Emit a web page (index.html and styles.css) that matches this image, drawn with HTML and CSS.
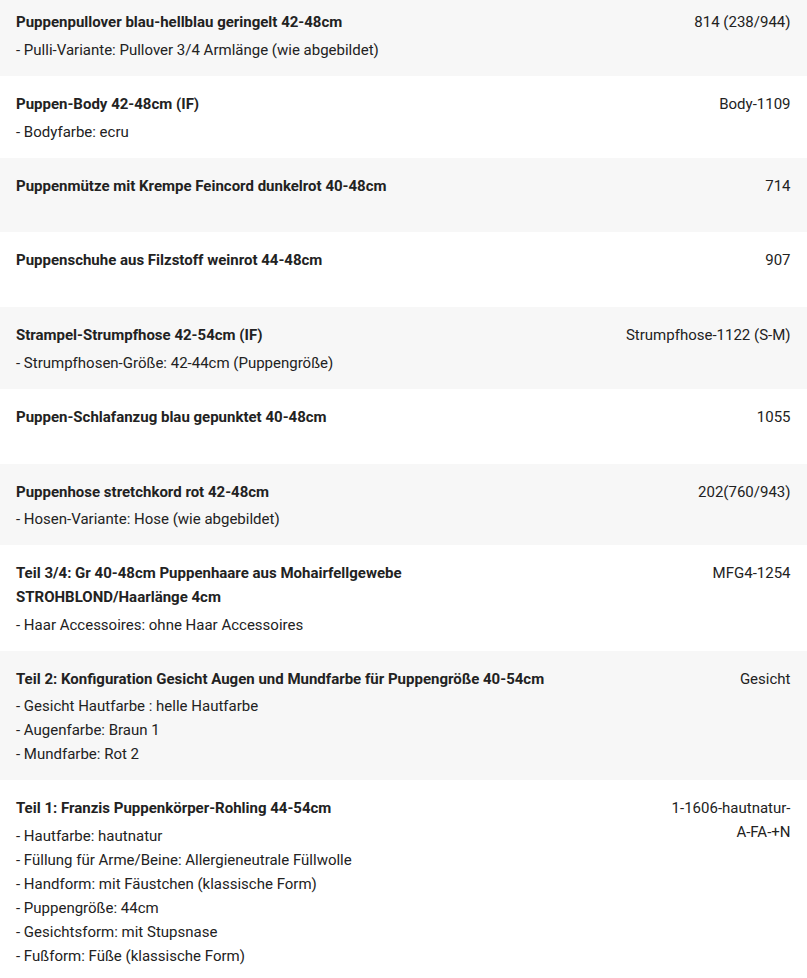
FILE: index.html
```html
<!DOCTYPE html>
<html lang="de">
<head>
<meta charset="utf-8">
<title>Bestellpositionen</title>
<link rel="stylesheet" href="styles.css">
</head>
<body>
<div class="items">
  <div class="item">
    <div class="info">
      <div class="title">Puppenpullover blau-hellblau geringelt 42-48cm</div>
      <ul class="opts"><li>- Pulli-Variante: Pullover 3/4 Armlänge (wie abgebildet)</li></ul>
    </div>
    <div class="sku">814 (238/944)</div>
  </div>
  <div class="item">
    <div class="info">
      <div class="title">Puppen-Body 42-48cm (IF)</div>
      <ul class="opts"><li>- Bodyfarbe: ecru</li></ul>
    </div>
    <div class="sku">Body-1109</div>
  </div>
  <div class="item">
    <div class="info">
      <div class="title">Puppenmütze mit Krempe Feincord dunkelrot 40-48cm</div>
    </div>
    <div class="sku">714</div>
  </div>
  <div class="item">
    <div class="info">
      <div class="title">Puppenschuhe aus Filzstoff weinrot 44-48cm</div>
    </div>
    <div class="sku">907</div>
  </div>
  <div class="item">
    <div class="info">
      <div class="title">Strampel-Strumpfhose 42-54cm (IF)</div>
      <ul class="opts"><li>- Strumpfhosen-Größe: 42-44cm (Puppengröße)</li></ul>
    </div>
    <div class="sku">Strumpfhose-1122 (S-M)</div>
  </div>
  <div class="item">
    <div class="info">
      <div class="title">Puppen-Schlafanzug blau gepunktet 40-48cm</div>
    </div>
    <div class="sku">1055</div>
  </div>
  <div class="item">
    <div class="info">
      <div class="title">Puppenhose stretchkord rot 42-48cm</div>
      <ul class="opts"><li>- Hosen-Variante: Hose (wie abgebildet)</li></ul>
    </div>
    <div class="sku">202(760/943)</div>
  </div>
  <div class="item">
    <div class="info">
      <div class="title">Teil 3/4: Gr 40-48cm Puppenhaare aus Mohairfellgewebe STROHBLOND/Haarlänge 4cm</div>
      <ul class="opts"><li>- Haar Accessoires: ohne Haar Accessoires</li></ul>
    </div>
    <div class="sku">MFG4-1254</div>
  </div>
  <div class="item">
    <div class="info">
      <div class="title">Teil 2: Konfiguration Gesicht Augen und Mundfarbe für Puppengröße 40-54cm</div>
      <ul class="opts">
        <li>- Gesicht Hautfarbe : helle Hautfarbe</li>
        <li>- Augenfarbe: Braun 1</li>
        <li>- Mundfarbe: Rot 2</li>
      </ul>
    </div>
    <div class="sku">Gesicht</div>
  </div>
  <div class="item">
    <div class="info">
      <div class="title">Teil 1: Franzis Puppenkörper-Rohling 44-54cm</div>
      <ul class="opts">
        <li>- Hautfarbe: hautnatur</li>
        <li>- Füllung für Arme/Beine: Allergieneutrale Füllwolle</li>
        <li>- Handform: mit Fäustchen (klassische Form)</li>
        <li>- Puppengröße: 44cm</li>
        <li>- Gesichtsform: mit Stupsnase</li>
        <li>- Fußform: Füße (klassische Form)</li>
      </ul>
    </div>
    <div class="sku">1-1606-hautnatur-A-FA-+N</div>
  </div>
</div>
</body>
</html>
```

FILE: styles.css
```css
html, body {
  margin: 0;
  padding: 0;
  background: #fff;
}
body {
  font-family: Roboto, "Liberation Sans", Arial, sans-serif;
  font-size: 15px;
  line-height: 24px;
  color: #222;
}
.items {
  margin-top: -5.6px;
}
.item {
  display: flex;
  justify-content: space-between;
  gap: 24px;
  padding: 16px 16.5px 14px 16px;
  min-height: 74.8px;
  box-sizing: border-box;
}
.item:nth-child(odd) {
  background: #f7f7f7;
}
.info {
  flex: 1 1 auto;
  max-width: 70%;
  min-width: 0;
}
.title {
  font-weight: 700;
}
.opts {
  list-style: none;
  margin: 3.6px 0 0;
  padding: 0;
}
.sku {
  flex: 0 0 168px;
  text-align: right;
  text-wrap: balance;
}
```
